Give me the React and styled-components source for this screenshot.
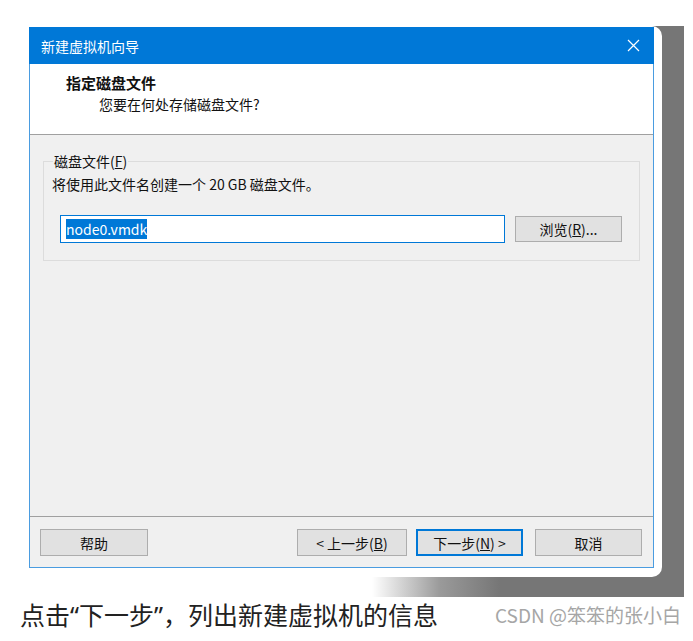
import styled, { createGlobalStyle } from 'styled-components';

const GlobalStyle = createGlobalStyle`
    html, body {
        margin: 0;
        padding: 0;
        background: #fff;
    }
    body {
        font-family: 'Noto Sans CJK SC', 'Noto Sans', sans-serif;
    }
`;

const Page = styled.div`
    width: 693px;
    height: 641px;
    padding-top: 26px;
    box-sizing: border-box;
`;

const Backdrop = styled.div`
    width: 684px;
    height: 571px;
    background: linear-gradient(to right, #fff 372px, #9a9a9a 440px, #767676 500px);
    box-sizing: border-box;
`;

const Card = styled.div`
    width: 662px;
    height: 551px;
    background: #fff;
    border-radius: 0 10px 10px 0;
    padding: 1px 0 0 29px;
    box-sizing: border-box;
`;

const Dialog = styled.div`
    width: 625px;
    height: 541px;
    border: 1px solid #4a9ce0;
    border-top: none;
    box-sizing: border-box;
    display: flex;
    flex-direction: column;
    background: #f0f0f0;
    font-size: 14px;
    color: #111;
`;

const TitleBar = styled.div`
    height: 37px;
    background: #0078d7;
    margin: 0 -1px;
    display: flex;
    align-items: center;
    justify-content: space-between;
    padding: 0 14px 0 12px;
    color: #fff;
    font-size: 14px;
`;

const Header = styled.div`
    height: 71px;
    background: #fff;
    border-bottom: 1px solid #a0a0a0;
    box-sizing: border-box;
    padding: 8px 0 0 36px;
`;

const HeadTitle = styled.div`
    font-weight: bold;
    font-size: 15px;
    line-height: 22px;
`;

const HeadSub = styled.div`
    font-size: 14px;
    line-height: 21px;
    padding-left: 33px;
`;

const Body = styled.div`
    flex: 1;
    padding: 16px 13px 0;
`;

const Group = styled.fieldset`
    margin: 0;
    border: 1px solid #dcdcdc;
    padding: 3px 16px 17px 8px;
    min-width: 0;
`;

const Legend = styled.legend`
    padding: 0 1px;
    margin-left: 1px;
    line-height: 20px;
    font-size: 14px;
`;

const Hint = styled.div`
    line-height: 20px;
    margin-bottom: 21px;
`;

const FileRow = styled.div`
    display: flex;
    align-items: center;
    gap: 10px;
    padding-left: 8px;
`;

const PathInput = styled.div`
    width: 445px;
    height: 28px;
    background: #fff;
    border: 1px solid #0078d7;
    box-sizing: border-box;
    display: flex;
    align-items: center;
    padding-left: 5px;
    font-size: 14px;
`;

const Selected = styled.span`
    background: #0078d7;
    color: #fff;
    line-height: 20px;
`;

const Button = styled.div`
    width: ${(p) => p.w || 107}px;
    height: ${(p) => p.h || 27}px;
    box-sizing: border-box;
    background: #e1e1e1;
    border: ${(p) => (p.primary ? '2px solid #0078d7' : '1px solid #adadad')};
    display: flex;
    align-items: center;
    justify-content: center;
    font-size: 14px;
    color: #111;
`;

const Footer = styled.div`
    height: 51px;
    border-top: 1px solid #a0a0a0;
    display: flex;
    align-items: flex-start;
    padding: 12px 11px 0 10px;
    box-sizing: border-box;
`;

const Spacer = styled.div`
    flex: 1;
`;

const Caption = styled.div`
    display: flex;
    align-items: center;
    justify-content: space-between;
    padding: 2px 12px 0 20px;
    line-height: 32px;
`;

const CaptionText = styled.div`
    font-family: 'Noto Sans', 'Noto Sans CJK SC', sans-serif;
    font-size: 25px;
    color: #222;
`;

const Watermark = styled.div`
    font-size: 19px;
    color: #a6a6a6;
`;

const CloseIcon = () => (
    <svg width="13" height="13" viewBox="0 0 13 13">
        <path d="M1 1L12 12M12 1L1 12" stroke="#fff" strokeWidth="1.2" />
    </svg>
);

const u = (c) => <span style={{ textDecoration: 'underline' }}>{c}</span>;

const App = () => {
    return (
        <Page>
            <GlobalStyle />
            <Backdrop>
                <Card>
                    <Dialog>
                        <TitleBar>
                            <span>新建虚拟机向导</span>
                            <CloseIcon />
                        </TitleBar>
                        <Header>
                            <HeadTitle>指定磁盘文件</HeadTitle>
                            <HeadSub>您要在何处存储磁盘文件?</HeadSub>
                        </Header>
                        <Body>
                            <Group>
                                <Legend>磁盘文件({u('F')})</Legend>
                                <Hint>将使用此文件名创建一个 20 GB 磁盘文件。</Hint>
                                <FileRow>
                                    <PathInput>
                                        <Selected>node0.vmdk</Selected>
                                    </PathInput>
                                    <Button w={107} h={26}>
                                        浏览({u('R')})...
                                    </Button>
                                </FileRow>
                            </Group>
                        </Body>
                        <Footer>
                            <Button w={108}>帮助</Button>
                            <Spacer />
                            <Button w={110}>&lt; 上一步({u('B')})</Button>
                            <Button w={107} primary style={{ marginLeft: 9 }}>
                                下一步({u('N')}) &gt;
                            </Button>
                            <Button w={107} style={{ marginLeft: 12 }}>
                                取消
                            </Button>
                        </Footer>
                    </Dialog>
                </Card>
            </Backdrop>
            <Caption>
                <CaptionText>点击“下一步”，列出新建虚拟机的信息</CaptionText>
                <Watermark>CSDN @笨笨的张小白</Watermark>
            </Caption>
        </Page>
    );
};

export default App;
